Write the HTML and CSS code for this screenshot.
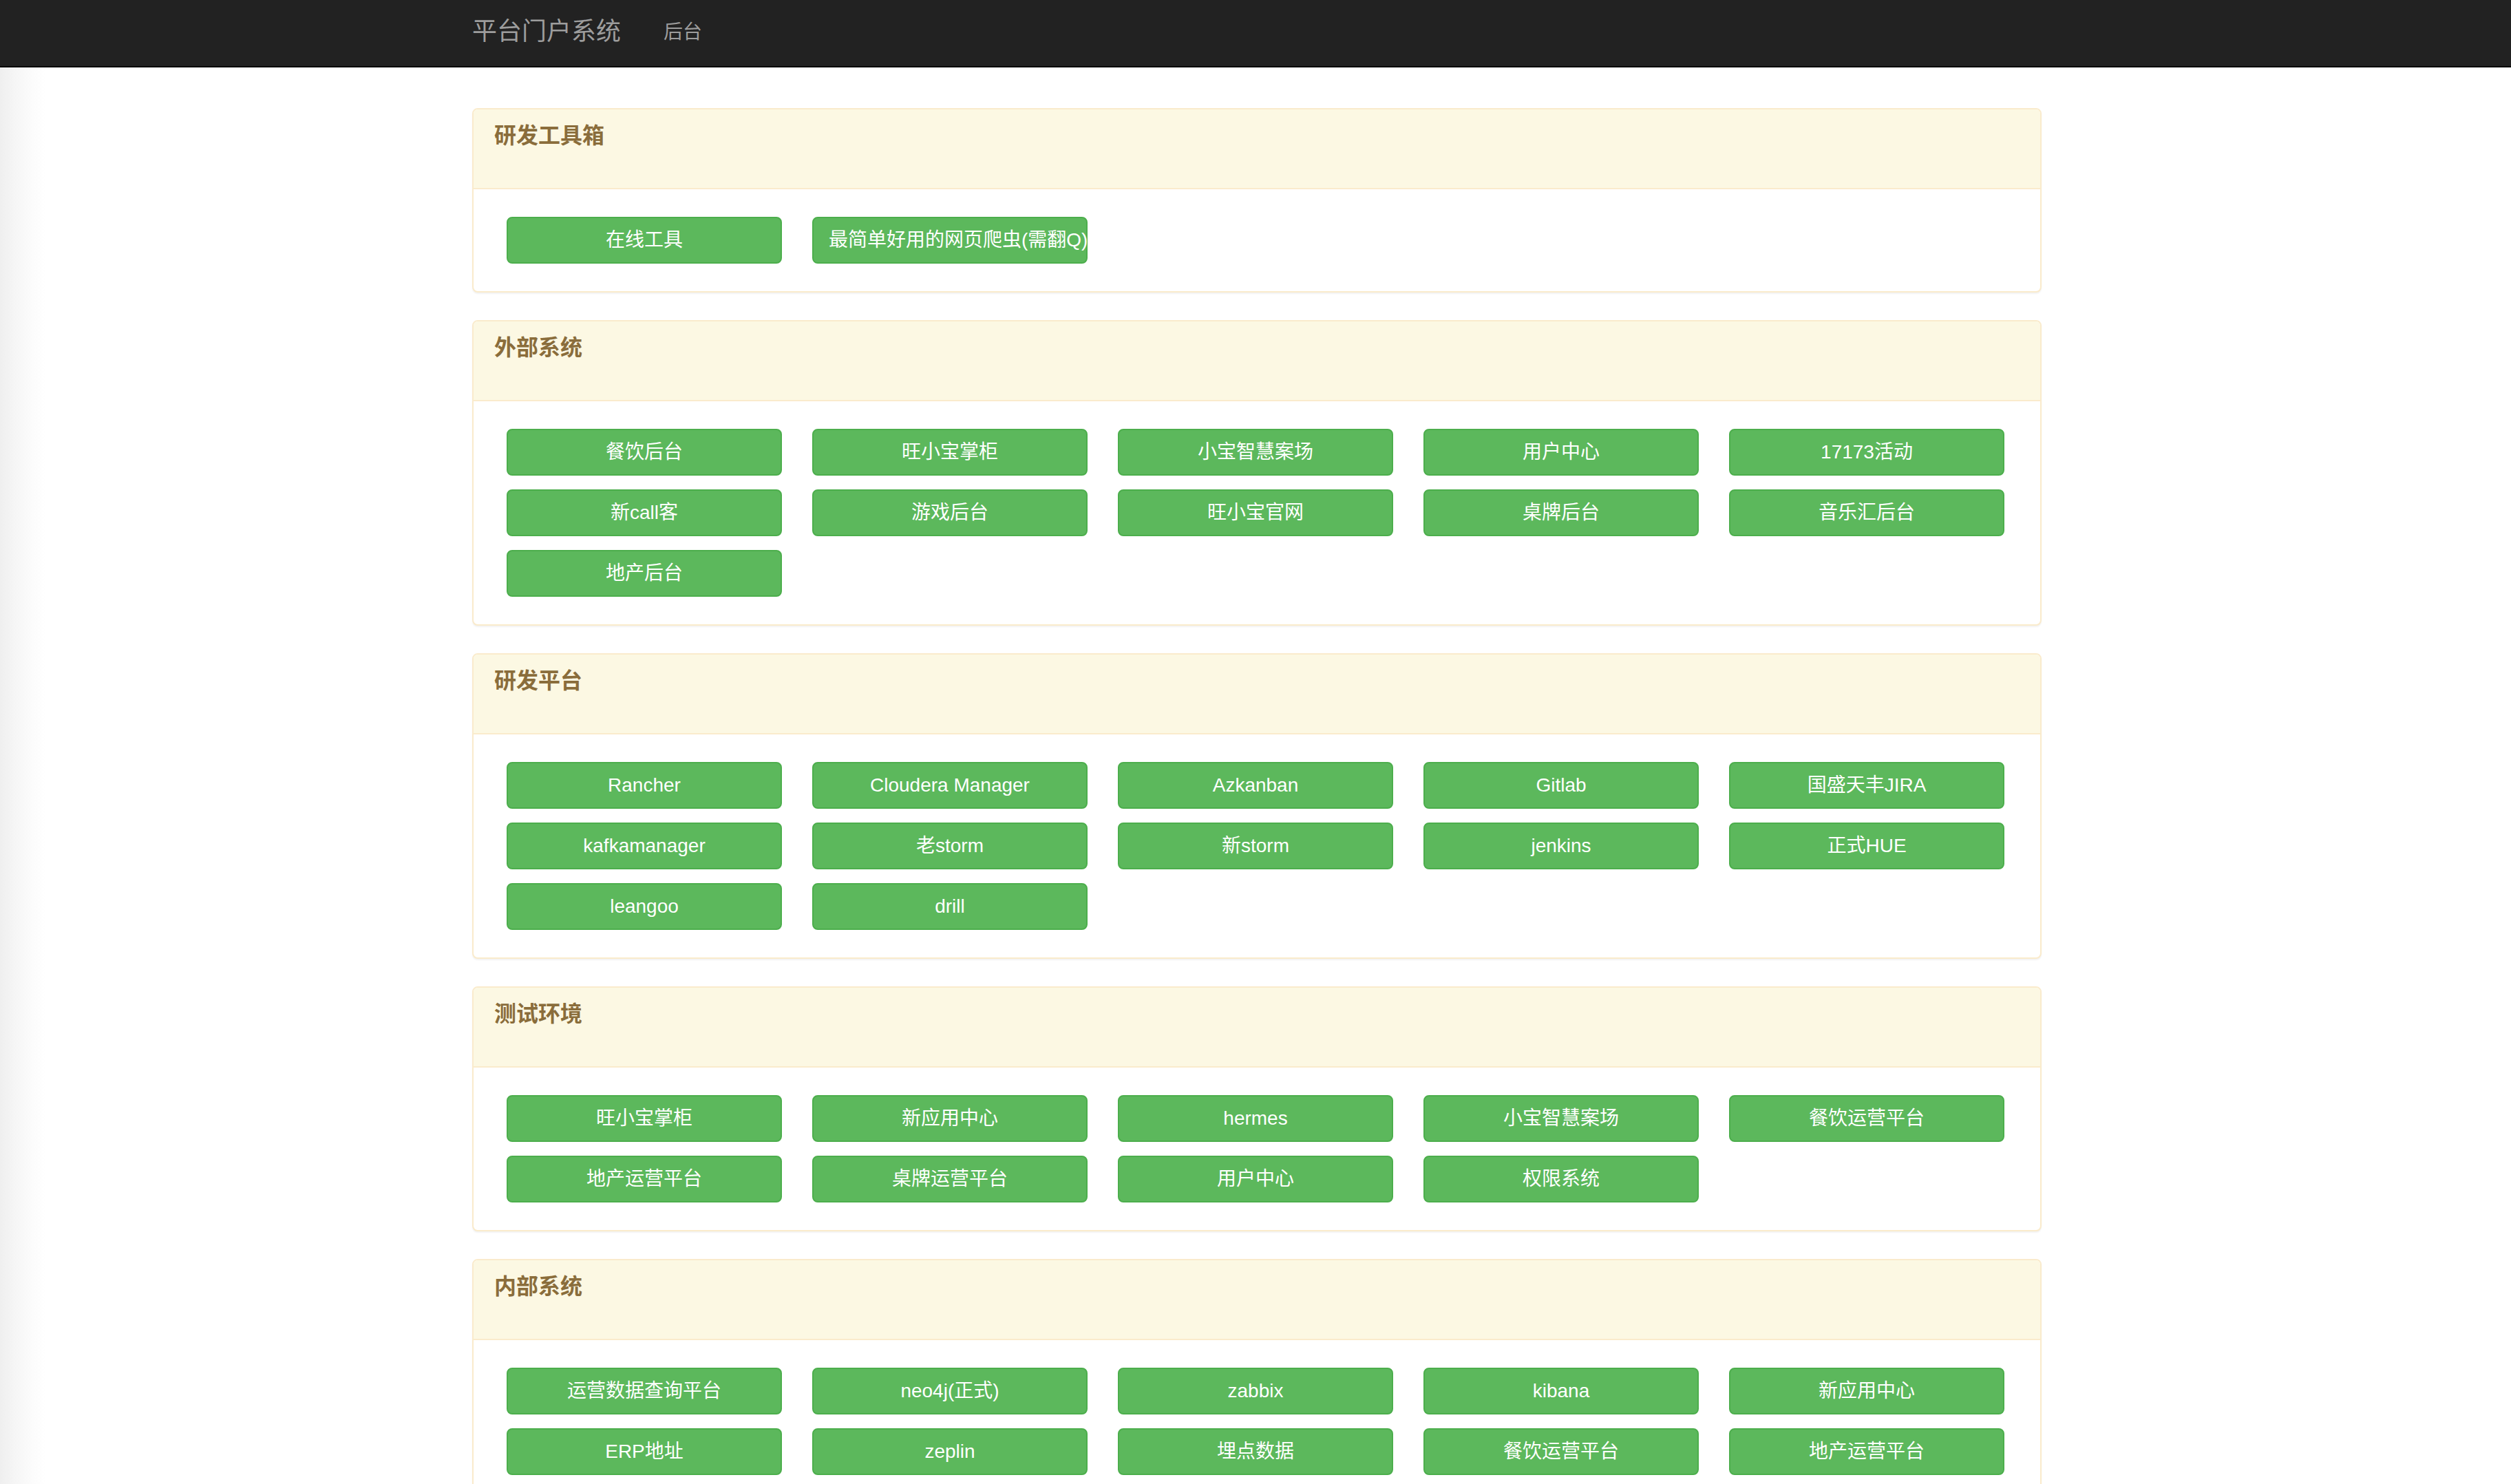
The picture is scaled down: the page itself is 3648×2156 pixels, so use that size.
FILE: index.html
```html
<!DOCTYPE html>
<html lang="zh-CN">
<head>
<meta charset="utf-8">
<title>平台门户系统</title>
<link rel="stylesheet" href="styles.css">
</head>
<body>
<nav class="navbar">
  <div class="nav-inner">
    <a class="brand">平台门户系统</a>
    <a class="nav-link">后台</a>
  </div>
</nav>
<main class="container">
  <section class="panel">
    <div class="panel-heading"><h3 class="panel-title">研发工具箱</h3></div>
    <div class="panel-body">
      <a class="btn">在线工具</a>
      <a class="btn">最简单好用的网页爬虫(需翻Q)</a>
    </div>
  </section>
  <section class="panel">
    <div class="panel-heading"><h3 class="panel-title">外部系统</h3></div>
    <div class="panel-body">
      <a class="btn">餐饮后台</a>
      <a class="btn">旺小宝掌柜</a>
      <a class="btn">小宝智慧案场</a>
      <a class="btn">用户中心</a>
      <a class="btn">17173活动</a>
      <a class="btn">新call客</a>
      <a class="btn">游戏后台</a>
      <a class="btn">旺小宝官网</a>
      <a class="btn">桌牌后台</a>
      <a class="btn">音乐汇后台</a>
      <a class="btn">地产后台</a>
    </div>
  </section>
  <section class="panel">
    <div class="panel-heading"><h3 class="panel-title">研发平台</h3></div>
    <div class="panel-body">
      <a class="btn">Rancher</a>
      <a class="btn">Cloudera Manager</a>
      <a class="btn">Azkanban</a>
      <a class="btn">Gitlab</a>
      <a class="btn">国盛天丰JIRA</a>
      <a class="btn">kafkamanager</a>
      <a class="btn">老storm</a>
      <a class="btn">新storm</a>
      <a class="btn">jenkins</a>
      <a class="btn">正式HUE</a>
      <a class="btn">leangoo</a>
      <a class="btn">drill</a>
    </div>
  </section>
  <section class="panel">
    <div class="panel-heading"><h3 class="panel-title">测试环境</h3></div>
    <div class="panel-body">
      <a class="btn">旺小宝掌柜</a>
      <a class="btn">新应用中心</a>
      <a class="btn">hermes</a>
      <a class="btn">小宝智慧案场</a>
      <a class="btn">餐饮运营平台</a>
      <a class="btn">地产运营平台</a>
      <a class="btn">桌牌运营平台</a>
      <a class="btn">用户中心</a>
      <a class="btn">权限系统</a>
    </div>
  </section>
  <section class="panel">
    <div class="panel-heading"><h3 class="panel-title">内部系统</h3></div>
    <div class="panel-body">
      <a class="btn">运营数据查询平台</a>
      <a class="btn">neo4j(正式)</a>
      <a class="btn">zabbix</a>
      <a class="btn">kibana</a>
      <a class="btn">新应用中心</a>
      <a class="btn">ERP地址</a>
      <a class="btn">zeplin</a>
      <a class="btn">埋点数据</a>
      <a class="btn">餐饮运营平台</a>
      <a class="btn">地产运营平台</a>
    </div>
  </section>
</main>
</body>
</html>
```

FILE: styles.css
```css
html, body {
  margin: 0;
  padding: 0;
}
body {
  font-family: "Liberation Sans", "Noto Sans CJK SC", sans-serif;
  font-size: 28px;
  color: #333;
  background: #fff linear-gradient(90deg, #efefef 0px, #f6f6f6 24px, #fcfcfc 48px, #fff 66px) no-repeat;
  background-size: 66px 100%;
  min-height: 2156px;
}
.navbar {
  background: #222;
  border-bottom: 2px solid #080808;
  height: 96px;
}
.nav-inner {
  width: 2280px;
  margin-left: calc(50% - 1138px);
  height: 96px;
  display: flex;
  align-items: center;
}
.brand {
  color: #9d9d9d;
  font-size: 36px;
  line-height: 40px;
  margin-right: 62px;
  margin-top: -4px;
}
.nav-link {
  color: #9d9d9d;
  font-size: 28px;
  line-height: 40px;
  margin-top: -2px;
}
.container {
  width: 2280px;
  margin-left: calc(50% - 1138px);
  padding-top: 59px;
}
.panel {
  border: 2px solid #faebcc;
  border-radius: 8px;
  background: #fff;
  box-shadow: 0 2px 2px rgba(0, 0, 0, 0.05);
  margin-bottom: 40px;
}
.panel-heading {
  background: #fcf8e3;
  border-bottom: 2px solid #faebcc;
  border-radius: 6px 6px 0 0;
  height: 116px;
  box-sizing: border-box;
  padding: 21px 30px;
}
.panel-title {
  margin: 0;
  font-size: 32px;
  line-height: 34px;
  font-weight: bold;
  color: #8a6d3b;
}
.panel-body {
  display: flex;
  flex-wrap: wrap;
  column-gap: 44px;
  row-gap: 20px;
  padding: 40px 30px 40px 48px;
}
.btn {
  display: block;
  box-sizing: border-box;
  width: 400px;
  height: 68px;
  padding: 0 22px;
  border: 2px solid #4cae4c;
  border-radius: 8px;
  background: #5cb85c;
  color: #fff;
  font-size: 28px;
  line-height: 64px;
  text-align: center;
  white-space: nowrap;
}
```
